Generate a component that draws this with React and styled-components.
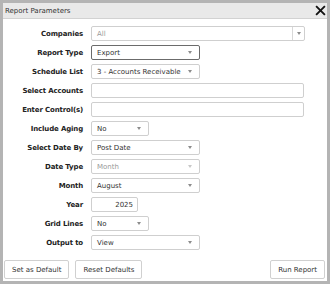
import React from 'react'
import styled, { createGlobalStyle } from 'styled-components'

const GlobalStyle = createGlobalStyle`
  body {
    margin: 0;
    background: #b4b4b4;
    font-family: 'DejaVu Sans', Verdana, sans-serif;
  }
`

const Dialog = styled.div`
  margin: 3px;
  width: 324px;
  height: 278px;
  background: #fff;
  display: flex;
  flex-direction: column;
`

const TitleBar = styled.div`
  height: 15px;
  display: flex;
  align-items: center;
  justify-content: space-between;
  padding: 0 1px 0 2px;
  background: #e9e9e9;
  border-bottom: 1px solid #d2d2d2;
  font-size: 7px;
  color: #333;
`

const Close = styled.svg`
  width: 11px;
  height: 11px;
`

const Form = styled.div`
  display: grid;
  grid-template-columns: 80px 1fr;
  column-gap: 8px;
  row-gap: 4px;
  grid-auto-rows: 15px;
  padding-top: 7px;
  align-items: center;
`

const Label = styled.div`
  text-align: right;
  font-size: 7px;
  font-weight: bold;
  letter-spacing: -0.15px;
  color: #222;
`

const Field = styled.div`
  box-sizing: border-box;
  height: 15px;
  width: ${({ w }) => w}px;
  display: flex;
  align-items: center;
  justify-content: ${({ right }) => (right ? 'flex-end' : 'space-between')};
  padding: 0 4px 0 5px;
  border: 1px solid ${({ focus }) => (focus ? '#6b6b6b' : '#cfcfcf')};
  border-radius: 2px;
  font-size: 7px;
  color: ${({ disabled }) => (disabled ? '#9a9a9a' : '#333')};
`

const Arrow = styled.span`
  width: 0;
  height: 0;
  border-left: 2.5px solid transparent;
  border-right: 2.5px solid transparent;
  border-top: 3px solid ${({ disabled }) => (disabled ? '#c8c8c8' : '#8c8c8c')};
  margin-right: ${({ flush }) => (flush ? '0' : '3px')};
`

const ComboButton = styled.span`
  align-self: stretch;
  width: 11px;
  display: flex;
  align-items: center;
  justify-content: center;
  border-left: 1px solid #d8d8d8;
  margin-right: -4px;
`

const Footer = styled.div`
  margin-top: auto;
  display: flex;
  gap: 6px;
  padding: 0 2px 2px 1px;
`

const Button = styled.button`
  box-sizing: border-box;
  height: 19px;
  padding: 0 7px;
  background: #fff;
  border: 1px solid #d0d0d0;
  border-radius: 2px;
  font-family: 'DejaVu Sans', Verdana, sans-serif;
  font-size: 7px;
  color: #333;
  margin-left: ${({ push }) => (push ? 'auto' : '0')};
`

const Select = ({ w, value, focus, disabled }) => (
  <Field w={w} focus={focus} disabled={disabled}>
    <span>{value}</span>
    <Arrow disabled={disabled} />
  </Field>
)

const App = () => (
  <>
    <GlobalStyle />
    <Dialog>
      <TitleBar>
        <span>Report Parameters</span>
        <Close viewBox="0 0 10 10">
          <path d="M1 1L9 9M9 1L1 9" stroke="#111" strokeWidth="1.7" />
        </Close>
      </TitleBar>
      <Form>
        <Label>Companies</Label>
        <Field w={214} disabled>
          <span>All</span>
          <ComboButton>
            <Arrow flush />
          </ComboButton>
        </Field>
        <Label>Report Type</Label>
        <Select w={109} value="Export" focus />
        <Label>Schedule List</Label>
        <Select w={109} value="3 - Accounts Receivable" />
        <Label>Select Accounts</Label>
        <Field w={213} />
        <Label>Enter Control(s)</Label>
        <Field w={213} />
        <Label>Include Aging</Label>
        <Select w={58} value="No" />
        <Label>Select Date By</Label>
        <Select w={109} value="Post Date" />
        <Label>Date Type</Label>
        <Select w={109} value="Month" disabled />
        <Label>Month</Label>
        <Select w={109} value="August" />
        <Label>Year</Label>
        <Field w={47} right>2025</Field>
        <Label>Grid Lines</Label>
        <Select w={58} value="No" />
        <Label>Output to</Label>
        <Select w={109} value="View" />
      </Form>
      <Footer>
        <Button>Set as Default</Button>
        <Button>Reset Defaults</Button>
        <Button push>Run Report</Button>
      </Footer>
    </Dialog>
  </>
)

export default App
